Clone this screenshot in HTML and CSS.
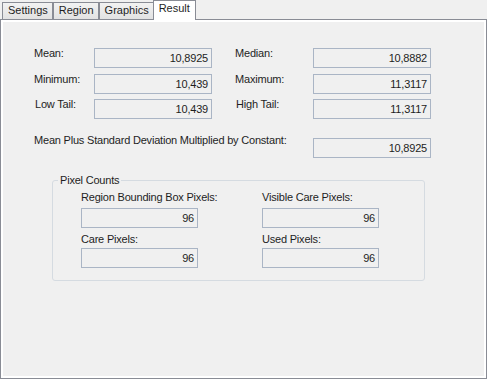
FILE: index.html
```html
<!DOCTYPE html>
<html lang="en">
<head>
    <meta charset="UTF-8">
    <meta name="viewport" content="width=device-width, initial-scale=1.0">
    <title>Result</title>
    <link rel="stylesheet" href="styles.css">
</head>
<body>
    <div class="tabs">
        <div class="tab">Settings</div>
        <div class="tab">Region</div>
        <div class="tab">Graphics</div>
        <div class="tab selected">Result</div>
    </div>
    <div class="panel">
        <div class="page">
            <div class="stats">
                <div class="label">Mean:</div>
                <div class="value">10,8925</div>
                <div class="label right">Median:</div>
                <div class="value">10,8882</div>

                <div class="label">Minimum:</div>
                <div class="value">10,439</div>
                <div class="label right">Maximum:</div>
                <div class="value">11,3117</div>

                <div class="label indent">Low Tail:</div>
                <div class="value">10,439</div>
                <div class="label right indent">High Tail:</div>
                <div class="value">11,3117</div>
            </div>

            <div class="constant-row">
                <div class="label wide">Mean Plus Standard Deviation Multiplied by Constant:</div>
                <div class="value">10,8925</div>
            </div>

            <fieldset class="group">
                <legend>Pixel Counts</legend>
                <div class="counts">
                    <div class="count">
                        <div class="label first">Region Bounding Box Pixels:</div>
                        <div class="value small">96</div>
                        <div class="label second">Care Pixels:</div>
                        <div class="value small">96</div>
                    </div>
                    <div class="count">
                        <div class="label first">Visible Care Pixels:</div>
                        <div class="value small">96</div>
                        <div class="label second">Used Pixels:</div>
                        <div class="value small">96</div>
                    </div>
                </div>
            </fieldset>
        </div>
    </div>
</body>
</html>
```

FILE: styles.css
```css
* {
    box-sizing: border-box;
}

html, body {
    margin: 0;
    height: 379px;
}

body {
    font-family: "Liberation Sans", Arial, sans-serif;
    font-size: 11px;
    line-height: 13px;
    letter-spacing: -0.2px;
    color: #1e1e1e;
    background-color: #f0f0f0;
    display: flex;
    flex-direction: column;
    overflow: hidden;
}

/* tab strip */
.tabs {
    display: flex;
    align-items: flex-end;
    height: 19px;
    padding-left: 2px;
}

.tab {
    height: 17px;
    padding: 1px 4px 0 5px;
    border: 1px solid #898c95;
    border-bottom: none;
    background: linear-gradient(#f2f2f2, #e2e2e2);
    letter-spacing: 0;
}

.tab.selected {
    position: relative;
    z-index: 1;
    height: 20px;
    margin-left: -1px;
    margin-bottom: -1px;
    padding: 1px 5px 0 5px;
    background: #ffffff;
}

.panel {
    flex: 1;
    border: 1px solid #898c95;
    background-color: #ffffff;
    padding: 2px;
}

.page {
    height: 100%;
    background-color: #f0f0f0;
    padding: 26px 0 0 31px;
}

/* statistics */
.stats {
    display: grid;
    grid-template-columns: 60px 118px 101px 118px;
    grid-auto-rows: 20px;
    row-gap: 5.5px;
}

.label {
    white-space: nowrap;
}

.stats .label {
    margin-top: -1px;
}

.label.right {
    padding-left: 23px;
}

.label.indent {
    padding-left: 1px;
}

.label.right.indent {
    padding-left: 24px;
}

.value {
    height: 20px;
    border: 1px solid #aab5c5;
    background-color: #f0f0f0;
    text-align: right;
    padding-right: 3px;
    line-height: 18px;
}

.constant-row {
    display: flex;
    margin-top: 19px;
}

.label.wide {
    width: 279px;
    margin-top: -4px;
}

.constant-row .value {
    width: 118px;
}

/* pixel counts group */
.group {
    width: 373px;
    margin: 16px 0 0 18px;
    padding: 4px 0 12px 28px;
    border: 1px solid #d5dbe1;
    border-radius: 3px;
}

.group legend {
    margin-left: -23px;
    padding: 0 2px;
}

.counts {
    display: grid;
    grid-template-columns: 181px 118px;
}

.value.small {
    width: 117px;
}

.label.first {
    margin-bottom: 4px;
}

.label.second {
    margin-top: 5px;
    margin-bottom: 2px;
}
```
